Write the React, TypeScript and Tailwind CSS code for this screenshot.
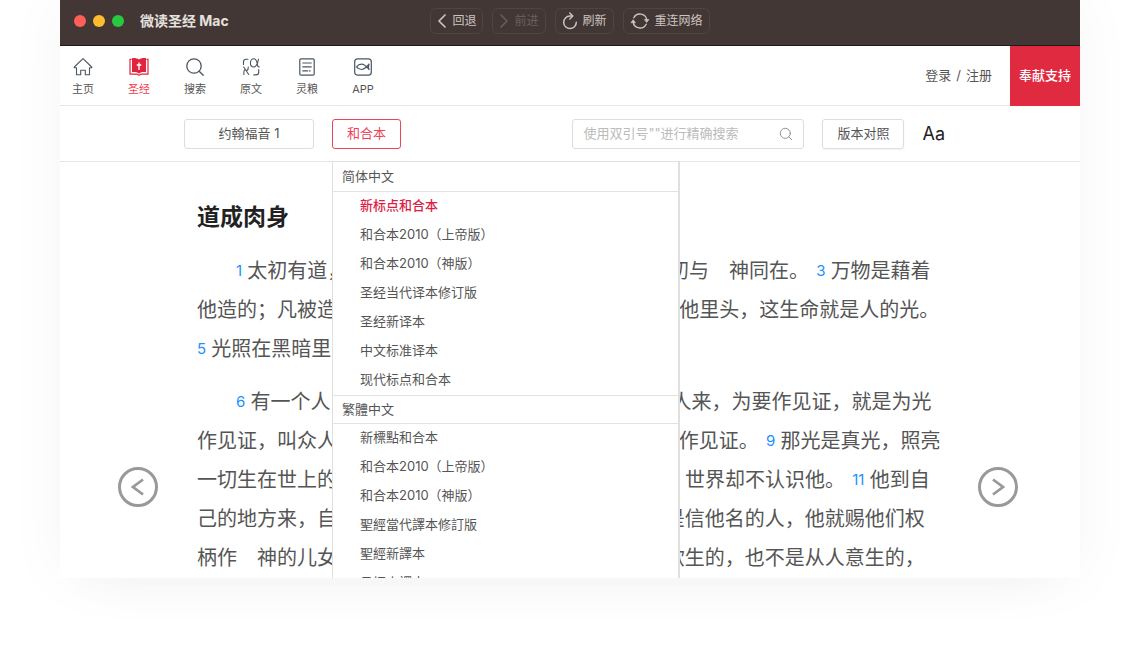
import { useState } from 'react';
import type { ReactNode } from 'react';

type VersionGroup = { title: string; lang: string; versions: string[] };

const GROUPS: VersionGroup[] = [
  {
    title: '简体中文',
    lang: 'zh-Hans',
    versions: [
      '新标点和合本',
      '和合本2010（上帝版）',
      '和合本2010（神版）',
      '圣经当代译本修订版',
      '圣经新译本',
      '中文标准译本',
      '现代标点和合本',
    ],
  },
  {
    title: '繁體中文',
    lang: 'zh-Hant',
    versions: [
      '新標點和合本',
      '和合本2010（上帝版）',
      '和合本2010（神版）',
      '聖經當代譯本修訂版',
      '聖經新譯本',
      '呂振中譯本',
    ],
  },
];

// numbers are verse marks, strings are text
const PARAGRAPHS: (string | number)[][][] = [
  [
    [1, '太初有道，道与　神同在，道是　神。', 2, '这道太初与　神同在。', 3, '万物是藉着'],
    ['他造的；凡被造的，没有一样不藉着他造的。', 4, '生命在他里头，这生命就是人的光。'],
    [5, '光照在黑暗里，黑暗却不接受光。'],
  ],
  [
    [6, '有一个人，是从　神那里差来，名叫约翰。', 7, '这人来，为要作见证，就是为光'],
    ['作见证，叫众人因他可以信。', 8, '他不是那光，乃要为光作见证。', 9, '那光是真光，照亮'],
    ['一切生在世上的人。', 10, '他在世界，世界是藉着他造的，世界却不认识他。', 11, '他到自'],
    ['己的地方来，自己的人不接待他。', 12, '凡接待他的，就是信他名的人，他就赐他们权'],
    ['柄作　神的儿女。', 13, '这等人不从血气生的，不是从情欲生的，也不是从人意生的，'],
  ],
];

const stroke = {
  fill: 'none',
  stroke: 'currentColor',
  strokeLinecap: 'round' as const,
  strokeLinejoin: 'round' as const,
};

function HomeIcon() {
  return (
    <svg viewBox="0 0 20 20" className="size-5" {...stroke} strokeWidth="1.1">
      <path d="M10 1.600 1.300 10c-.3.500 0 .8.500.8h1.700v7h4.200v-4.600h4.600v4.600h4.200v-7h1.700c.5 0 .8-.3.500-.8z" />
    </svg>
  );
}

function BibleIcon() {
  return (
    <svg viewBox="0 0 20 20" className="size-5">
      <path d="M3 1.200C5.600.8 8.200 1.200 10 2.600 11.800 1.200 14.400.8 17 1.200v14c-2.600-.3-5.200 0-7 1.500-1.800-1.500-4.400-1.800-7-1.500z" fill="#e0243f" />
      <path d="M2.600 2.300H1v14.800h6.900c.7 1.400 3.500 1.400 4.200 0H19V2.300h-1.600" fill="none" stroke="#e0243f" strokeWidth="1.200" />
      <path d="M10 5.500v7.500M7.700 8h4.600" stroke="#fff" strokeWidth="1.300" />
    </svg>
  );
}

function SearchIcon({ className }: { className: string }) {
  return (
    <svg viewBox="0 0 20 20" className={className} {...stroke} strokeWidth="1.300">
      <circle cx="9" cy="9" r="7.200" />
      <path d="m14.200 14.200 4 4" />
    </svg>
  );
}

function OriginalIcon() {
  return (
    <svg viewBox="0 0 20 20" className="size-5" {...stroke} strokeWidth="1.100">
      <path d="M2.500 7.500V5c0-1.700 1-2.700 2.700-2.700H7M17.700 12.500v2.700c0 1.700-1 2.700-2.700 2.700h-2.200" />
      <path d="M17.500 2.200c-.6 3.500-2 7.800-4.900 7.800-2 0-3.200-1.700-3.200-4s1.300-4.200 3.400-4.200c3 0 3.200 4.300 3.700 6.600.2 1 .7 1.600 1.700 1.500" />
      <path d="m2.700 10 5 7.500M7.300 10c.2 1.800-.4 3-1.800 3.800M4 12.300c-1.500 1.300-1.400 3-1.200 5.200" />
    </svg>
  );
}

function DevotionIcon() {
  return (
    <svg viewBox="0 0 20 20" className="size-5" {...stroke} strokeWidth="1.200">
      <rect x="2.800" y="1.800" width="14.400" height="16.400" rx="1.200" />
      <path d="M5.800 6h8.400M5.800 9.900h8.400M5.800 13.900h4.700M12.300 13.900h.8" />
    </svg>
  );
}

function AppIcon() {
  return (
    <svg viewBox="0 0 20 20" className="size-5" {...stroke} strokeWidth="1.200">
      <rect x="1.700" y="1.800" width="16.600" height="16.400" rx="3" />
      <path d="M16 7.200c-2.700 3.200-4.600 5.300-7.400 5.300-2.200 0-3.800-1-5.100-2.600C4.800 8.200 6.400 7.200 8.600 7.200c2.800 0 4.800 2.100 7.300 5.300M16 7.200c-.8 1.800-.8 3.400 0 5.300" />
    </svg>
  );
}

function BackIcon() {
  return (
    <svg viewBox="0 0 10 16" className="h-4 w-[10px]" {...stroke} strokeWidth="1.700">
      <path d="M8 2 2 8l6 6" />
    </svg>
  );
}

function ForwardIcon() {
  return (
    <svg viewBox="0 0 10 16" className="h-4 w-[10px]" {...stroke} strokeWidth="1.500">
      <path d="m2 2 6 6-6 6" />
    </svg>
  );
}

function RefreshIcon() {
  return (
    <svg viewBox="0 0 16 18" className="h-[18px] w-4" {...stroke} strokeWidth="1.500">
      <path d="M10.200 4H7.800a6.300 6.300 0 1 0 6.500 6.300" />
      <path d="m7.800 1 3 3-3 3" />
    </svg>
  );
}

function ReconnectIcon() {
  return (
    <svg viewBox="0 0 20 18" className="h-[18px] w-5" {...stroke} strokeWidth="1.400">
      <path d="M3.800 5.800a6.900 6.900 0 0 1 13 2.400M3.200 9.800a6.900 6.900 0 0 0 13 2.400" />
      <path d="M1.200 10.400 3.200 7.800l2 2.600zM14.800 7.600h4l-2 2.600z" fill="currentColor" strokeWidth="0.800" />
    </svg>
  );
}

function BarButton({ icon, label, disabled }: { icon: ReactNode; label: string; disabled?: boolean }) {
  return (
    <button
      type="button"
      disabled={disabled}
      className="flex h-[26px] items-center gap-[5px] rounded-md border border-[#50443f] px-1.5 text-xs text-[#cbc3c0] disabled:text-[#6b5f5c]"
    >
      {icon}
      {label}
    </button>
  );
}

function TitleBar() {
  return (
    <header className="grid h-[46px] shrink-0 grid-cols-[1fr_auto_1fr] border-b border-[#221919] bg-[#423735] pt-2">
      <div className="flex h-[26px] items-center pl-[14px]">
        <div className="flex gap-[7px]">
          <span className="size-[12px] rounded-full bg-[#ff5f57]" />
          <span className="size-[12px] rounded-full bg-[#febc2e]" />
          <span className="size-[12px] rounded-full bg-[#28c840]" />
        </div>
        <h1 className="ml-4 text-sm font-bold text-[#e6e0de]">微读圣经 Mac</h1>
      </div>
      <div className="flex gap-[9px]">
        <BarButton icon={<BackIcon />} label="回退" />
        <BarButton icon={<ForwardIcon />} label="前进" disabled />
        <BarButton icon={<RefreshIcon />} label="刷新" />
        <BarButton icon={<ReconnectIcon />} label="重连网络" />
      </div>
    </header>
  );
}

const NAV = [
  { label: '主页', icon: <HomeIcon /> },
  { label: '圣经', icon: <BibleIcon />, active: true },
  { label: '搜索', icon: <SearchIcon className="size-5" /> },
  { label: '原文', icon: <OriginalIcon /> },
  { label: '灵粮', icon: <DevotionIcon /> },
  { label: 'APP', icon: <AppIcon /> },
];

function NavBar() {
  return (
    <nav className="flex h-[60px] shrink-0 border-b border-[#e6e6e6]">
      <div className="flex gap-2.5 pt-[11px]">
        {NAV.map(item => (
          <a key={item.label} href="#" className="flex w-[46px] flex-col items-center gap-1 text-[#4b5563]">
            {item.icon}
            <span className={'text-[11px] leading-4 ' + (item.active ? 'text-[#f5414f]' : 'text-[#555]')}>
              {item.label}
            </span>
          </a>
        ))}
      </div>
      <div className="ml-auto flex items-center gap-[5px] pr-[18px] text-[13px] text-[#555]">
        <a href="#">登录</a>
        <span>/</span>
        <a href="#">注册</a>
      </div>
      <a href="#" className="-mb-px flex w-[70px] items-center justify-center bg-[#e02a40] text-[13px] font-medium text-white">
        奉献支持
      </a>
    </nav>
  );
}

function VersionMenu({ selected, onSelect }: { selected: string; onSelect: (key: string) => void }) {
  return (
    <div className="absolute top-[42px] left-0 z-10 w-[348px] border border-r-2 border-[#e0e0e0] bg-white pt-px text-[13px] text-[#555]">
      {GROUPS.map((group, g) => (
        <section key={group.title} lang={group.lang}>
          <h3 className={'h-[29px] border-b border-[#e3e3e3] pl-[9px] leading-[27px] ' + (g > 0 ? 'border-t' : '')}>
            {group.title}
          </h3>
          <ul>
            {group.versions.map((name, i) => {
              const key = `${g}-${i}`;
              return (
                <li key={key}>
                  <button
                    type="button"
                    onClick={() => onSelect(key)}
                    className={
                      'block h-[29px] w-full pl-[27px] text-left ' +
                      (selected === key ? 'font-medium text-[#dc1e46]' : '')
                    }
                  >
                    {name}
                  </button>
                </li>
              );
            })}
          </ul>
        </section>
      ))}
    </div>
  );
}

function Toolbar() {
  const [open, setOpen] = useState(true);
  const [selected, setSelected] = useState('0-0');

  return (
    <div className="flex h-14 shrink-0 items-center border-b border-[#e6e6e6] pr-[135px] pl-[124px] text-[13px] text-[#555]">
      <button type="button" className="h-[30px] w-[130px] rounded-[3px] border border-[#ddd]">
        约翰福音 1
      </button>
      <div className="relative ml-[18px]">
        <button
          type="button"
          aria-expanded={open}
          onClick={() => setOpen(!open)}
          className="block h-[30px] w-[69px] rounded-[3px] border border-[#ee4358] text-[#ee4358]"
        >
          和合本
        </button>
        {open && <VersionMenu selected={selected} onSelect={setSelected} />}
      </div>
      <label className="ml-auto flex h-[30px] w-[232px] items-center rounded-[3px] border border-[#ddd] pr-2.5 pl-2.5 text-[#888]">
        <input
          type="search"
          aria-label="搜索"
          placeholder={'使用双引号""进行精确搜索'}
          className="min-w-0 flex-1 outline-none placeholder:text-[#bbb]"
        />
        <SearchIcon className="size-[14px]" />
      </label>
      <button type="button" className="ml-[18px] h-[30px] w-[82px] rounded-[3px] border border-[#ddd] shadow-xs">
        版本对照
      </button>
      <button type="button" className="ml-[18px] text-lg text-[#222]">
        Aa
      </button>
    </div>
  );
}

function PageButton({ label, path }: { label: string; path: string }) {
  return (
    <button
      type="button"
      aria-label={label}
      className="flex size-10 shrink-0 items-center justify-center self-end rounded-full border-3 border-[#999] text-[#999]"
    >
      <svg viewBox="0 0 20 20" className="size-5" fill="none" stroke="currentColor" strokeWidth="2.800">
        <path d={path} />
      </svg>
    </button>
  );
}

function Reader() {
  return (
    <main className="flex min-h-0 flex-1 pr-[62px] pb-[71px] pl-[58px]">
      <PageButton label="上一章" path="M15 2.500 5 10l10 7.500" />
      <article className="min-w-0 flex-1 px-[39px] pt-9 whitespace-nowrap">
        <h2 className="text-[23px] leading-[38px] font-bold text-[#222]">道成肉身</h2>
        <div className="mt-4 space-y-[14px] text-xl leading-[39px] text-[#555]">
          {PARAGRAPHS.map((lines, p) => (
            <p key={p} className="indent-[39px]">
              {lines.map((line, l) => (
                <span key={l} className={l > 0 ? 'block indent-0' : 'block'}>
                  {line.map((part, i) =>
                    typeof part === 'number' ? (
                      <span
                        key={i}
                        className={'mr-px align-[2px] text-[15px] leading-none text-[#1e90ff] ' + (i > 0 ? 'ml-[3px]' : '')}
                      >
                        {' '}
                        {part}{' '}
                      </span>
                    ) : (
                      part
                    ),
                  )}
                </span>
              ))}
            </p>
          ))}
        </div>
      </article>
      <PageButton label="下一章" path="m5 2.500 10 7.500-10 7.500" />
    </main>
  );
}

export default function App() {
  return (
    <div
      lang="zh-Hans"
      className="h-screen overflow-hidden bg-white pr-[57px] pb-[76px] pl-[60px] font-[Inter,'Noto_Sans_CJK_SC',sans-serif]"
    >
      <div className="flex h-full flex-col overflow-hidden bg-white shadow-[0_0_60px_rgba(0,0,0,0.04),0_30px_50px_-30px_rgba(0,0,0,0.04)]">
        <TitleBar />
        <NavBar />
        <Toolbar />
        <Reader />
      </div>
    </div>
  );
}
